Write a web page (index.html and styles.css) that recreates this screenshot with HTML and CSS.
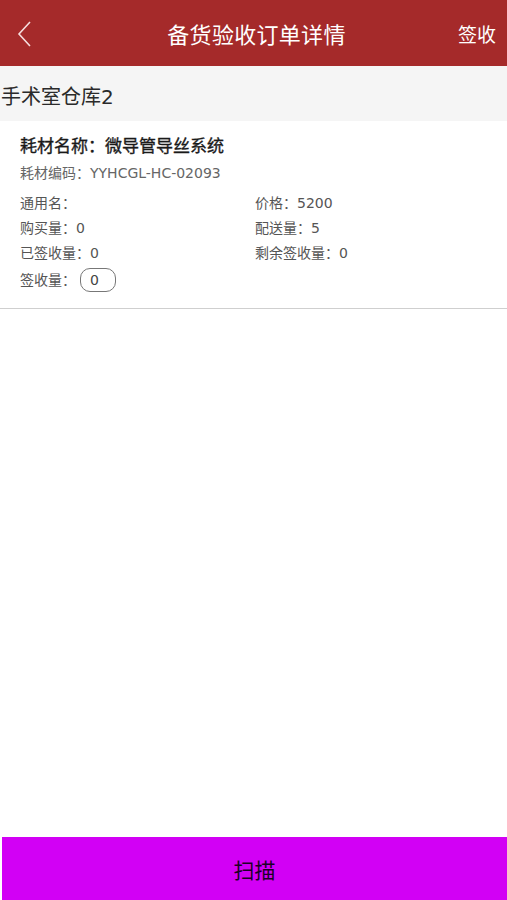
FILE: index.html
```html
<!DOCTYPE html>
<html lang="zh-CN">
<head>
    <meta charset="UTF-8">
    <meta name="viewport" content="width=device-width, initial-scale=1.0">
    <title>备货验收订单详情</title>
    <link rel="stylesheet" href="styles.css">
</head>
<body>
    <div class="page">
        <header class="nav-bar">
            <span class="nav-back">
                <svg width="16" height="26" viewBox="0 0 16 26"><path d="M13 1 L2 13 L13 25" fill="none" stroke="#f6dede" stroke-width="1.6"/></svg>
            </span>
            <h1 class="nav-title">备货验收订单详情</h1>
            <span class="nav-action">签收</span>
        </header>
        <div class="store-header">手术室仓库2</div>
        <div class="item-card">
            <div class="item-name">耗材名称：微导管导丝系统</div>
            <div class="item-code">耗材编码：YYHCGL-HC-02093</div>
            <div class="item-grid">
                <div class="item-cell">通用名：</div>
                <div class="item-cell">价格：5200</div>
                <div class="item-cell">购买量：0</div>
                <div class="item-cell">配送量：5</div>
                <div class="item-cell">已签收量：0</div>
                <div class="item-cell">剩余签收量：0</div>
                <div class="item-cell sign-row">签收量：<span class="qty-input">0</span></div>
            </div>
        </div>
        <div class="spacer"></div>
        <button class="scan-btn">扫描</button>
    </div>
</body>
</html>
```

FILE: styles.css
```css
* { margin: 0; padding: 0; box-sizing: border-box; }
body { font-family: "DejaVu Sans", "Noto Sans CJK SC", sans-serif; background: #fff; color: #333; }
.page { display: flex; flex-direction: column; height: 900px; }
.nav-bar { height: 66px; background: #a52a2a; display: grid; grid-template-columns: 1fr auto 1fr; align-items: center; padding: 0 11px 0 17px; color: #fff; font-family: "Noto Sans CJK SC", sans-serif; }
.nav-back { display: flex; padding-top: 2px; }
.nav-title { font-size: 22px; font-weight: 400; letter-spacing: 0.3px; }
.nav-action { font-size: 19px; justify-self: end; }
.store-header { height: 55px; background: #f5f5f5; font-size: 20px; color: #2a2a2a; padding: 4px 1px 0; display: flex; align-items: center; }
.item-card { background: #fff; padding: 11px 20px 14px; border-bottom: 1px solid #cfcfcf; }
.item-name { font-size: 17px; font-weight: 400; color: #1a1a1a; line-height: 28px; -webkit-text-stroke: 0.35px #1a1a1a; }
.item-code { font-size: 14px; color: #666; line-height: 26px; margin-bottom: 5px; }
.item-grid { display: grid; grid-template-columns: 235px 1fr; font-size: 14px; color: #555; }
.item-cell { line-height: 25px; }
.sign-row { display: flex; align-items: center; height: 28px; }
.qty-input { display: inline-block; width: 36px; height: 24px; border: 1px solid #777; border-radius: 10px; line-height: 22px; padding-left: 9px; font-size: 14px; color: #444; margin-left: 4px; }
.spacer { flex: 1; }
.scan-btn { height: 63px; margin-left: 2px; background: #d200f5; border: none; font-family: "Noto Sans CJK SC", sans-serif; font-size: 21px; color: #1a0026; }
```
